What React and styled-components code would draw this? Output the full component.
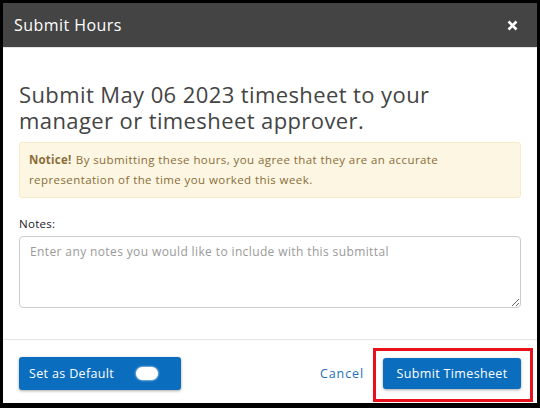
import React from "react";
import styled, { createGlobalStyle } from "styled-components";

const Global = createGlobalStyle`
  html, body { margin: 0; padding: 0; background: #000; }
  body { width: 540px; height: 408px; overflow: hidden; font-family: "Open Sans", "Liberation Sans", sans-serif; }
  * { box-sizing: border-box; }
`;

const Frame = styled.div`
  width: 540px;
  height: 408px;
  padding: 3px 3px 5px 3px;
  background: #000;
`;

const Modal = styled.div`
  width: 534px;
  height: 400px;
  background: #fff;
  display: flex;
  flex-direction: column;
`;

const Header = styled.div`
  height: 45px;
  flex: none;
  background: #444444;
  display: flex;
  align-items: center;
  justify-content: space-between;
  padding: 0 19px 0 11px;
  border-bottom: 1px solid #e5e5e5;
`;

const HeaderTitle = styled.h4`
  margin: 0;
  color: #fff;
  font-size: 16px;
  font-weight: 400;
  letter-spacing: 0.45px;
`;

const Close = styled.button`
  border: 0;
  background: none;
  padding: 0;
  width: 12px;
  height: 12px;
  display: flex;
  align-items: center;
  justify-content: center;
  cursor: pointer;
`;

const Body = styled.div`
  flex: 1;
  padding: 33px 16px 0 16px;
  display: flex;
  flex-direction: column;
`;

const Title = styled.h3`
  margin: 0;
  max-width: 440px;
  font-size: 22px;
  line-height: 26px;
  font-weight: 400;
  color: #444;
  letter-spacing: 0.4px;
`;

const Notice = styled.div`
  margin-top: 9px;
  background: #fcf6e2;
  border: 1px solid #f6ebc9;
  border-radius: 3px;
  padding: 7px 12px 7px 9px;
  font-size: 11.5px;
  line-height: 20px;
  color: #8a6d3b;
  letter-spacing: 0.42px;
  strong { font-weight: 700; letter-spacing: 0.2px; margin-right: 1px; }
`;

const Label = styled.label`
  margin-top: 18px;
  font-size: 11.5px;
  color: #222;
  font-weight: 500;
  letter-spacing: 0.3px;
`;

const TextArea = styled.textarea`
  margin-top: 5px;
  height: 72px;
  width: 100%;
  border: 1px solid #cccccc;
  border-radius: 4px;
  padding: 6px 10px;
  font-family: inherit;
  font-size: 12px;
  letter-spacing: 0.38px;
  color: #444;
  resize: vertical;
  &::placeholder { color: #9a9a9a; }
`;

const Footer = styled.div`
  flex: none;
  height: 64px;
  border-top: 1px solid #e5e5e5;
  display: flex;
  align-items: center;
  justify-content: space-between;
  padding: 3px 16px 0 16px;
`;

const PrimaryButton = styled.button`
  height: ${(p) => p.$h || 32}px;
  background: #0a6dbd;
  color: #fff;
  border: 0;
  border-radius: 3px;
  box-shadow: 0 1px 3px rgba(0, 0, 0, 0.35);
  font-family: inherit;
  font-size: 12.5px;
  font-weight: 500;
  letter-spacing: 0.35px;
  display: flex;
  align-items: center;
  padding: 0 ${(p) => p.$pr || 12}px 0 ${(p) => p.$pl || 12}px;
  gap: 22px;
  cursor: pointer;
`;

const Toggle = styled.span`
  width: 22px;
  height: 13px;
  border-radius: 7px;
  background: #fff;
  box-shadow: 0 0 2px 0.5px rgba(255, 255, 255, 0.7);
`;

const Right = styled.div`
  display: flex;
  align-items: center;
  gap: 19px;
`;

const LinkButton = styled.a`
  color: #1b6fb9;
  font-size: 12.5px;
  letter-spacing: 0.9px;
  text-decoration: none;
  cursor: pointer;
`;

const Highlight = styled.div`
  position: relative;
  &::after {
    content: "";
    position: absolute;
    top: -10px;
    left: -10px;
    right: -12px;
    bottom: -13px;
    border: 3px solid #e8101a;
    pointer-events: none;
  }
`;

export default function App() {
  return (
    <>
      <Global />
      <Frame>
        <Modal>
          <Header>
            <HeaderTitle>Submit Hours</HeaderTitle>
            <Close aria-label="Close">
              <svg width="11" height="11" viewBox="0 0 11 11">
                <path d="M1.5 1.5 L9.5 9.5 M9.5 1.5 L1.5 9.5" stroke="#fff" strokeWidth="2.6" strokeLinecap="butt" />
              </svg>
            </Close>
          </Header>
          <Body>
            <Title>
              Submit May 06 2023 timesheet to your manager or timesheet approver.
            </Title>
            <Notice>
              <strong>Notice!</strong> By submitting these hours, you agree that they are an accurate representation of the time you worked this week.
            </Notice>
            <Label>Notes:</Label>
            <TextArea placeholder="Enter any notes you would like to include with this submittal" />
          </Body>
          <Footer>
            <PrimaryButton $h={33} $pl={10} $pr={23}>
              Set as Default
              <Toggle />
            </PrimaryButton>
            <Right>
              <LinkButton>Cancel</LinkButton>
              <Highlight>
                <PrimaryButton $h={31} $pl={13.5} $pr={13.5}>Submit Timesheet</PrimaryButton>
              </Highlight>
            </Right>
          </Footer>
        </Modal>
      </Frame>
    </>
  );
}
